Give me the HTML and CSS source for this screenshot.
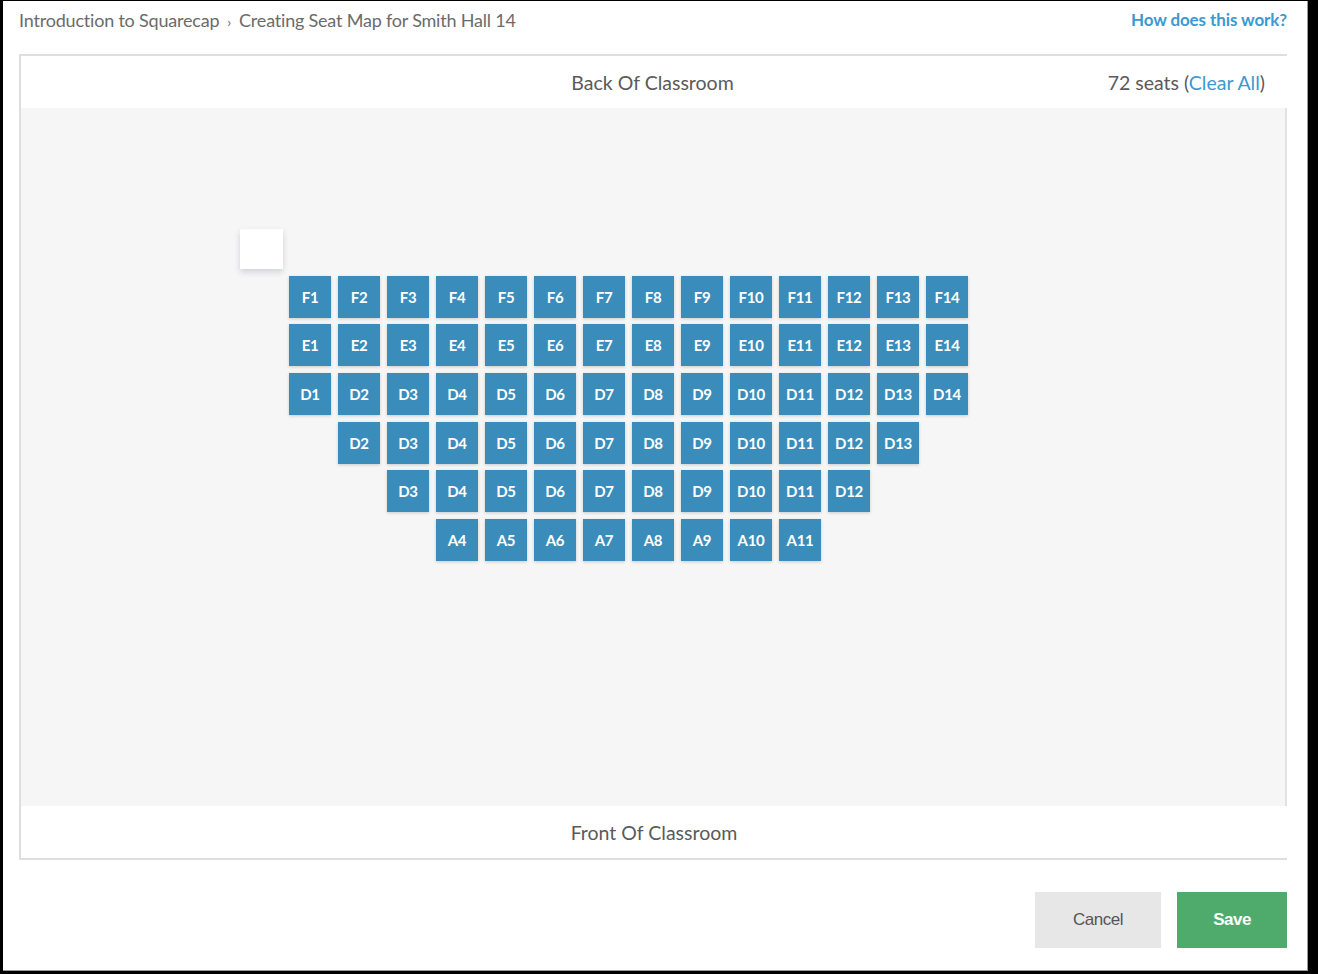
FILE: index.html
```html
<!DOCTYPE html>
<html lang="en">
<head>
<meta charset="utf-8">
<title>Creating Seat Map</title>
<link rel="stylesheet" href="styles.css">
</head>
<body>
<div class="frame">
  <div class="topbar">
    <div class="crumbs"><span>Introduction to Squarecap</span><span class="sep">›</span><span>Creating Seat Map for Smith Hall 14</span></div>
    <a class="help" href="#">How does this work?</a>
  </div>
  <div class="panel">
    <div class="panel-head">
      <div class="head-title">Back Of Classroom</div>
      <div class="count">72 seats (<a href="#">Clear All</a>)</div>
    </div>
    <div class="canvas">
      <div class="seats" id="seats">
        <div class="seat empty" style="grid-column:1;grid-row:1"></div>
      </div>
    </div>
    <div class="panel-foot">Front Of Classroom</div>
  </div>
  <div class="actions">
    <button class="btn cancel">Cancel</button>
    <button class="btn save">Save</button>
  </div>
</div>
<script>
(function(){
  var rows = [
    {p:'F', from:1, to:14, col:2},
    {p:'E', from:1, to:14, col:2},
    {p:'D', from:1, to:14, col:2},
    {p:'D', from:2, to:13, col:3},
    {p:'D', from:3, to:12, col:4},
    {p:'A', from:4, to:11, col:5}
  ];
  var g = document.getElementById('seats');
  rows.forEach(function(r, i){
    for (var n = r.from; n <= r.to; n++) {
      var d = document.createElement('div');
      d.className = 'seat';
      d.textContent = r.p + n;
      d.style.gridRow = (i + 2);
      d.style.gridColumn = (r.col + n - r.from);
      g.appendChild(d);
    }
  });
})();
</script>
</body>
</html>
```
FILE: styles.css
```css
html, body {
  margin: 0;
  padding: 0;
  background: #000;
}
body {
  font-family: "Lato", "Noto Sans", sans-serif;
}
.frame {
  box-sizing: border-box;
  margin: 1px 10px 0 3px;
  height: 970px;
  background: #fff;
  border-right: 1px solid #9a9a9a;
  border-bottom: 1px solid #9a9a9a;
  padding: 0 20px 0 16px;
}
.topbar {
  height: 53px;
  display: flex;
  justify-content: space-between;
  align-items: flex-start;
  padding-top: 8px;
  box-sizing: border-box;
}
.crumbs {
  font-size: 18px;
  color: #6b6b6b;
  letter-spacing: -0.2px;
}
.crumbs .sep {
  margin: 0 8px;
  font-size: 14px;
}
.help {
  font-size: 17px;
  color: #3a9ad0;
  font-weight: 700;
  text-decoration: none;
  letter-spacing: -0.1px;
}
.panel {
  border-top: 2px solid #dedede;
  border-left: 2px solid #dedede;
  border-bottom: 2px solid #dedede;
}
.panel-head {
  position: relative;
  height: 52px;
  display: flex;
  align-items: center;
  justify-content: center;
  color: #5a5a5a;
  font-size: 19.5px;
}
.head-title {
  margin-left: -3px;
}
.count {
  position: absolute;
  right: 22px;
  top: 15px;
  font-size: 19.5px;
  color: #5a5a5a;
}
.count a {
  color: #3a9ad0;
  text-decoration: none;
}
.canvas {
  height: 698px;
  background: #f6f6f6;
  border-right: 2px solid #e2e2e2;
  box-sizing: border-box;
  padding: 119px 0 0 219px;
}
.seats {
  display: grid;
  grid-template-columns: repeat(15, 42px);
  grid-auto-rows: 42px;
  column-gap: 7px;
  row-gap: 6.7px;
}
.seat {
  background: #3a8cbb;
  color: #fff;
  font-size: 15px;
  font-weight: 700;
  display: flex;
  align-items: center;
  justify-content: center;
  box-shadow: 0 1px 3px rgba(0,0,0,0.18);
  letter-spacing: -0.3px;
}
.seat.empty {
  background: #fff;
  width: 43px;
  margin-top: 2px;
  box-shadow: 0 3px 6px rgba(40,50,90,0.18);
}
.panel-foot {
  height: 52px;
  display: flex;
  align-items: center;
  justify-content: center;
  color: #5a5a5a;
  font-size: 19.5px;
}
.actions {
  display: flex;
  justify-content: flex-end;
  gap: 16px;
  margin-top: 32px;
}
.btn {
  height: 56px;
  border: none;
  font-family: "Liberation Sans", Arial, sans-serif;
  font-size: 17px;
  cursor: pointer;
  letter-spacing: -0.5px;
}
.cancel {
  width: 126px;
  background: #e7e7e7;
  color: #555;
}
.save {
  width: 110px;
  background: #4fab6c;
  color: #fff;
  font-weight: 700;
}
```
